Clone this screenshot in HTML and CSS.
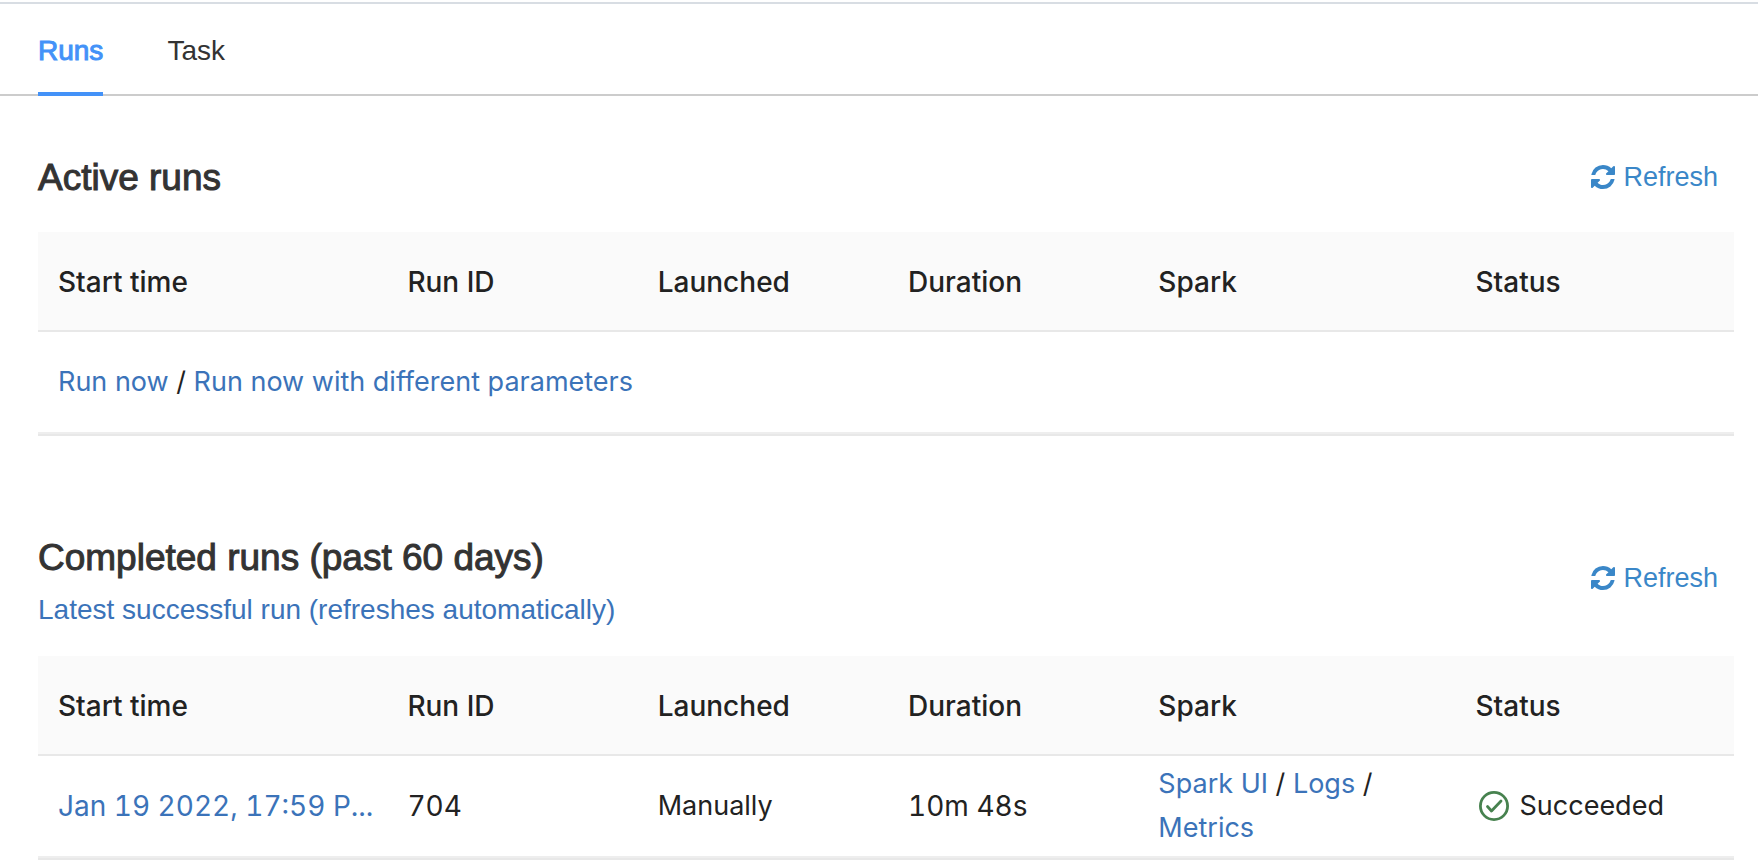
FILE: index.html
```html
<!DOCTYPE html>
<html lang="en">
<head>
<meta charset="utf-8">
<title>Job runs</title>
<link rel="stylesheet" href="styles.css">
</head>
<body>
<svg class="sprite" aria-hidden="true">
  <symbol id="refresh" viewBox="0 0 1536 1536">
    <path d="M1511 928q0 5-1 7-64 268-268 434.500t-478 166.500q-146 0-282.500-55t-243.500-157l-129 129q-19 19-45 19t-45-19-19-45v-448q0-26 19-45t45-19h448q26 0 45 19t19 45-19 45l-137 137q71 66 161 102t187 36q134 0 250-65t186-179q11-17 53-117 8-23 30-23h192q13 0 22.500 9.500t9.500 22.500zm25-800v448q0 26-19 45t-45 19h-448q-26 0-45-19t-19-45 19-45l138-138q-148-137-349-137-134 0-250 65t-186 179q-11 17-53 117-8 23-30 23h-199q-13 0-22.500-9.500t-9.500-22.500v-7q65-268 270-434.500t480-166.500q146 0 284 55.500t245 156.500l130-129q19-19 45-19t45 19 19 45z"/>
  </symbol>
</svg>
<nav class="tabs">
  <a class="tab tab-active" href="#runs" aria-current="page">Runs</a>
  <a class="tab" href="#task">Task</a>
</nav>
<main class="content" id="runs">
  <section class="section">
    <header class="section-head">
      <h2 class="title">Active runs</h2>
      <button class="refresh" type="button"><svg class="refresh-icon" aria-hidden="true"><use href="#refresh"/></svg>Refresh</button>
    </header>
    <table class="table">
      <colgroup><col class="col-start"><col class="col-mid"><col class="col-mid"><col class="col-mid"><col class="col-spark"><col></colgroup>
      <thead>
        <tr><th scope="col">Start time</th><th scope="col">Run ID</th><th scope="col">Launched</th><th scope="col">Duration</th><th scope="col">Spark</th><th scope="col">Status</th></tr>
      </thead>
      <tbody>
        <tr><td colspan="6"><a href="#run">Run now</a> / <a href="#run-params">Run now with different parameters</a></td></tr>
      </tbody>
    </table>
  </section>
  <section class="section">
    <header class="section-head">
      <div>
        <h2 class="title">Completed runs (past 60 days)</h2>
        <a class="latest" href="#latest">Latest successful run (refreshes automatically)</a>
      </div>
      <button class="refresh" type="button"><svg class="refresh-icon" aria-hidden="true"><use href="#refresh"/></svg>Refresh</button>
    </header>
    <table class="table">
      <colgroup><col class="col-start"><col class="col-mid"><col class="col-mid"><col class="col-mid"><col class="col-spark"><col></colgroup>
      <thead>
        <tr><th scope="col">Start time</th><th scope="col">Run ID</th><th scope="col">Launched</th><th scope="col">Duration</th><th scope="col">Spark</th><th scope="col">Status</th></tr>
      </thead>
      <tbody>
        <tr>
          <td class="num clip"><a href="#run-704">Jan 19 2022, 17:59 P...</a></td>
          <td class="num">704</td>
          <td>Manually</td>
          <td class="num">10m 48s</td>
          <td><a href="#spark">Spark UI</a> / <a href="#logs">Logs</a> / <a href="#metrics">Metrics</a></td>
          <td><span class="status"><svg class="status-icon" viewBox="0 0 30 30" aria-hidden="true"><circle cx="15" cy="15" r="13.600"/><path d="M8.500 15.500l4 4.500 9.500-10"/></svg>Succeeded</span></td>
        </tr>
      </tbody>
    </table>
  </section>
</main>
</body>
</html>
```
FILE: styles.css
```css
* { box-sizing: border-box; }
body {
  margin: 0;
  padding-top: 2px;
  background: #fff;
  color: #333;
  font-family: "Liberation Sans", Arial, sans-serif;
  font-size: 28px;
  line-height: 44px;
}
a { color: #3b73b9; text-decoration: none; }
.sprite { position: absolute; width: 0; height: 0; }

.tabs {
  display: flex;
  gap: 64px;
  padding: 0 38px;
  border-top: 2px solid #d8dde3;
  box-shadow: inset 0 -2px #ccc;
}
.tab { padding: 25px 0 19px; border-bottom: 4px solid transparent; color: #333; }
.tab-active { border-color: #4392f8; color: #4392f8; -webkit-text-stroke: 1px #4392f8; }

.content { padding: 0 24px 0 38px; }
.section { padding-top: 60px; }
.section + .section { padding-top: 100px; }
.section-head {
  display: flex;
  align-items: center;
  justify-content: space-between;
  padding: 0 16px 32px 0;
}
.section + .section .section-head { padding-bottom: 24px; }
.title {
  margin: 0;
  font-size: 37px;
  font-weight: 400;
  line-height: 44px;
  -webkit-text-stroke: 1px #333;
}
.latest { display: block; margin-top: 8px; }
.refresh {
  display: flex;
  align-items: center;
  gap: 8px;
  margin-bottom: 2px;
  padding: 0;
  border: 0;
  background: none;
  color: #3a87c8;
  font: inherit;
  font-size: 27px;
  line-height: 40px;
  cursor: pointer;
}
.section + .section .refresh { margin-bottom: 12px; }
.refresh-icon { width: 24px; height: 24px; fill: currentColor; }

.table {
  width: 100%;
  table-layout: fixed;
  border-collapse: separate;
  border-spacing: 0;
  border-bottom: 2px solid #e8e8e8;
  color: #222;
  font-family: Inter, "Liberation Sans", sans-serif;
  font-size: 27px;
}
.col-start { width: 20.600%; }
.col-mid { width: 14.760%; }
.col-spark { width: 18.700%; }
.table th, .table td { padding: 0 20px; text-align: left; vertical-align: middle; }
.table th {
  height: 100px;
  padding-top: 2px;
  border-bottom: 2px solid #e8e8e8;
  background: #fafafa;
  font-size: 28px;
  font-weight: 500;
}
.table td { height: 102px; border-bottom: 2px solid #eee; }
.table .num { font-size: 28px; font-variant-numeric: tabular-nums; }
.clip { overflow: hidden; white-space: nowrap; }
.status { display: flex; align-items: center; gap: 11px; padding-left: 3px; }
.status-icon {
  flex: none;
  width: 30px;
  height: 30px;
  fill: none;
  stroke: #47824f;
  stroke-width: 2.800;
  stroke-linecap: round;
  stroke-linejoin: round;
}
```
